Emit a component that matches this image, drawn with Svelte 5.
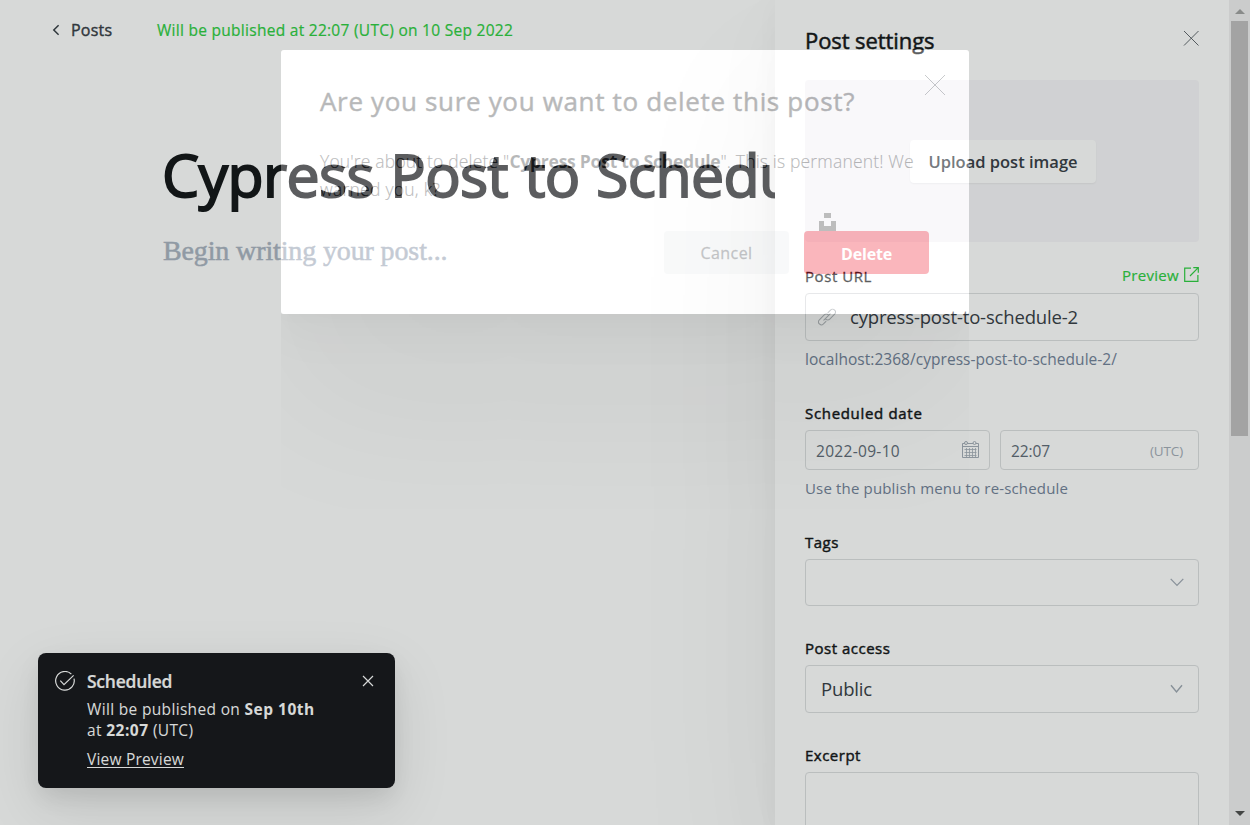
<script>
  const postTitle = 'Cypress Post to Schedule';
  const slug = 'cypress-post-to-schedule-2';
</script>

<div class="screen">
  <main class="editor">
    <header>
      <a class="back" href="#posts">
        <svg width="8" height="12" viewBox="0 0 8 12"><path d="M6.6 1.2 1.8 6l4.8 4.8" fill="none" stroke="#394047" stroke-width="1.5" /></svg>
        <span>Posts</span>
      </a>
      <span class="status">Will be published at 22:07 (UTC) on 10 Sep 2022</span>
    </header>
    <h1>{postTitle}</h1>
    <p class="body">Begin writing your post...</p>
  </main>

  <aside class="panel">
    <div class="panel-head">
      <h2>Post settings</h2>
      <svg width="16" height="16" viewBox="0 0 16 16"><path d="m1 1 14.5 14.5M15.5 1 1 15.5" stroke="#50575e" stroke-width=".9" /></svg>
    </div>

    <div class="upload">
      <button class="upload-btn">Upload post image</button>
      <svg class="unsplash" width="17" height="18" viewBox="0 0 17 18" shape-rendering="crispEdges"><path fill="#a1a1a1" d="M5 0h7v5H5zM0 8h5v5h7V8h5v10H0z" /></svg>
    </div>

    <div class="label first">
      <span class="url-label">Post URL</span>
      <a class="preview" href="#preview">
        <span>Preview</span>
        <svg width="15" height="15" viewBox="0 0 15 15" fill="none" stroke="#30cf43" stroke-width="1.2"><path d="M7 1.1H.7v13.2h13.2V8M6 9l8-8.2M9.3.7h5v5" /></svg>
      </a>
    </div>
    <div class="field url">
      <svg width="18" height="18" viewBox="0 0 24 24" fill="none" stroke="#b4b8bc" stroke-width="1.4" stroke-linecap="round"><path d="m10.6 17.8-3.3 3.4a3.8 3.8 0 0 1-5.5-5.4l6.5-6.6a3.8 3.8 0 0 1 5.5 0M13.4 6.2l3.3-3.4a3.8 3.8 0 0 1 5.5 5.4l-6.5 6.6a3.8 3.8 0 0 1-5.5 0" /><path d="m7.8 16.2 8.4-8.4" /></svg>
      <span>{slug}</span>
    </div>
    <p class="help host">localhost:2368/{slug}/</p>

    <div class="label"><b class="sched">Scheduled date</b></div>
    <div class="when">
      <div class="field date">
        <span>2022-09-10</span>
        <svg width="17" height="18" viewBox="0 0 17 18" fill="none" stroke="#a5adb8" stroke-width="1"><path d="M.5 2.5h16v14H.5zM.5 5.5h16" /><path d="M2.5 8.5h12M2.5 11.5h12M2.5 14.5h12M4.5 7v9M7.5 7v9M10.5 7v9M13.5 7v9" stroke-width=".8" /><circle cx="4" cy="2" r="1.5" fill="#fff" /><circle cx="12.5" cy="2" r="1.5" fill="#fff" /></svg>
      </div>
      <div class="field time"><span>22:07</span><small>(UTC)</small></div>
    </div>
    <p class="help resched">Use the publish menu to re-schedule</p>

    <div class="label"><b>Tags</b></div>
    <div class="field select tags">
      <span></span>
      <svg width="14" height="9" viewBox="0 0 14 9"><path d="M.7.9 7 7.4 13.3.9" fill="none" stroke="#a3abb6" stroke-width="1.3" /></svg>
    </div>

    <div class="label gap"><b>Post access</b></div>
    <div class="field select access">
      <span>Public</span>
      <svg width="13" height="10" viewBox="0 0 13 10"><path d="M1 1.2 6.5 8 12 1.2" fill="none" stroke="#a0a9b3" stroke-width="1.4" /></svg>
    </div>

    <div class="label gap"><b>Excerpt</b></div>
    <div class="field excerpt"></div>
  </aside>

  <div class="scrollbar">
    <i class="up"></i>
    <div class="thumb"></div>
    <i class="down"></i>
  </div>

  <section class="toast">
    <svg class="tick" width="20" height="20" viewBox="0 0 20 20" fill="none" stroke="#fff" stroke-width="1.2"><path d="M16.4 3.1A9.3 9.3 0 1 0 19 7.6" /><path d="M5.3 9.6 9 13.6 18.6 4.4" /></svg>
    <div class="toast-copy">
      <h3>Scheduled</h3>
      <p>Will be published on <b>Sep 10th</b><br />at <b>22:07</b> (UTC)</p>
      <a href="#view">View Preview</a>
    </div>
    <svg class="toast-x" width="12" height="12" viewBox="0 0 12 12"><path d="m1 1 10 10M11 1 1 11" stroke="#fff" stroke-width="1.2" /></svg>
  </section>

  <div class="dim"></div>
  <div class="modal-shadow"><div></div></div>
  <section class="modal">
    <svg class="modal-x" width="22" height="22" viewBox="0 0 22 22"><path d="m1 1 20 20M21 1 1 21" stroke="#394047" stroke-width=".9" /></svg>
    <h2>Are you sure you want to delete this post?</h2>
    <p>You're about to delete "<b>{postTitle}</b>". This is permanent! We<br /><span>warned you, k?</span></p>
    <div class="actions">
      <button class="cancel">Cancel</button>
      <button class="delete">Delete</button>
    </div>
  </section>
</div>

<style>
  :global(body) { margin: 0; overflow: hidden; }
  .screen {
    position: relative;
    display: flex;
    width: 1250px;
    height: 825px;
    overflow: hidden;
    background: #fff;
    color: #15171a;
    font-family: "Open Sans", "Noto Sans", sans-serif;
  }
  .screen * { box-sizing: border-box; }
  h1, h2, h3, p { margin: 0; font-weight: 400; }
  a { color: inherit; text-decoration: none; }
  button { border: 0; padding: 0; font-family: inherit; }
  svg { display: block; flex: none; }

  .editor { width: 775px; flex: none; white-space: nowrap; overflow: hidden; }
  header { display: flex; align-items: center; height: 60px; padding-left: 52px; }
  .back { display: flex; align-items: center; width: 105px; gap: 11px; font-size: 16px; color: #394047; letter-spacing: .2px; -webkit-text-stroke: .4px #394047; }
  .status { font-size: 15.5px; letter-spacing: .28px; color: #30cf43; -webkit-text-stroke: .2px #30cf43; }
  h1 { margin: 74px 0 0 162px; line-height: 80px; font-size: 59px; letter-spacing: -.62px; word-spacing: 1.7px; -webkit-text-stroke: 1.9px #15171a; }
  .body { margin: 17px 0 0 163px; font: 400 28px/40px "Liberation Serif", serif; letter-spacing: -.13px; color: #abb4c2; -webkit-text-stroke: .5px #abb4c2; }

  .panel {
    position: relative;
    width: 454px;
    flex: none;
    padding: 0 30px;
    background: #fff;
    box-shadow: 0 80px 170px rgba(0, 0, 0, .06), 0 22px 70px rgba(0, 0, 0, .04), 0 5px 22px rgba(0, 0, 0, .03);
  }
  .panel-head { display: flex; justify-content: space-between; height: 80px; }
  .panel-head h2 { line-height: 30px; padding-top: 25px; font-size: 22px; letter-spacing: -.08px; -webkit-text-stroke: .5px #15171a; }
  .panel-head svg { margin-top: 30px; }
  .upload { position: relative; display: flex; justify-content: center; align-items: center; height: 162px; border-radius: 4px; background: #f7f6f9; padding-left: 2px; }
  .upload-btn { width: 186px; height: 43px; border-radius: 4px; background: #fff; font-size: 16.5px; font-weight: 600; color: #394047; box-shadow: 0 1px 2px rgba(0, 0, 0, .06); }
  .unsplash { position: absolute; left: 14px; bottom: 11px; }
  .label { display: flex; justify-content: space-between; line-height: 34px; padding-top: 19px; font-size: 15px; letter-spacing: .3px; }
  .label.first { padding-top: 16px; height: 51px; }
  .label.gap { padding-top: 25px; }
  .label b { font-weight: 400; font-size: 15px; letter-spacing: .5px; -webkit-text-stroke: .45px #15171a; }
  .label b.sched { letter-spacing: .68px; }
  .url-label { letter-spacing: .57px; padding-top: 1px; -webkit-text-stroke: .3px #15171a; }
  .preview { display: flex; align-items: center; gap: 5px; color: #30cf43; height: 33px; }
  .preview span { -webkit-text-stroke: .2px #30cf43; }
  .field { display: flex; align-items: center; border: 1px solid #dddfe1; border-radius: 4px; color: #394047; }
  .url { height: 48px; padding-left: 12px; font-size: 18.5px; letter-spacing: -.16px; }
  .url svg { margin-right: 14px; }
  .url span, .access span { padding-bottom: 2px; }
  .help { height: 36px; line-height: 36px; font-size: 15.5px; color: #74839a; letter-spacing: .04px; }
  .resched { font-size: 15px; letter-spacing: .16px; }
  .when { display: flex; gap: 10px; }
  .date, .time { height: 40px; justify-content: space-between; font-size: 15.5px; color: #626d79; padding: 0 10px; letter-spacing: .31px; }
  .date span, .time span, .time small { padding-top: 2px; }
  .date { width: 185px; }
  .time { width: 199px; padding-right: 15px; letter-spacing: -.11px; }
  .time small { font-size: 13.5px; color: #a5adb8; letter-spacing: -.15px; }
  .select { justify-content: space-between; padding: 0 14px 0 15px; font-size: 18.5px; letter-spacing: -.17px; }
  .tags { height: 47px; }
  .access { height: 48px; padding-right: 15px; }
  .excerpt { height: 90px; }

  .scrollbar { width: 21px; flex: none; position: relative; display: flex; flex-direction: column; align-items: center; background: #f1f0f1; }
  .thumb { width: 17px; height: 415px; margin-top: 7px; background: #c1bfc0; }
  .up, .down { width: 0; height: 0; border: 5px solid transparent; }
  .up { margin-top: 9px; border-top: 0; border-bottom-color: #a3a3a3; }
  .down { margin-top: auto; margin-bottom: 9px; border-bottom: 0; border-top-color: #505050; }

  .toast {
    position: absolute;
    left: 38px;
    top: 653px;
    display: flex;
    width: 357px;
    height: 135px;
    padding: 18px 21px 0 17px;
    border-radius: 8px;
    background: #18181d;
    color: #fff;
    box-shadow: 0 10px 22px rgba(0, 0, 0, .08), 0 20px 60px rgba(0, 0, 0, .1);
  }
  .toast-copy { flex: 1; padding-left: 12px; white-space: nowrap; }
  .toast h3 { font-size: 17.5px; line-height: 20px; font-weight: 600; letter-spacing: -.25px; -webkit-text-stroke: .2px #fff; }
  .toast p { padding-top: 8px; font-size: 15.5px; line-height: 21px; letter-spacing: .33px; }
  .toast p b { font-weight: 700; letter-spacing: .5px; }
  .toast a { display: block; padding-top: 8px; font-size: 15.5px; line-height: 21px; letter-spacing: .2px; text-decoration: underline; text-underline-offset: 2px; }
  .toast-x { margin-top: 4px; }

  .dim { position: absolute; left: 281px; top: 50px; width: 688px; height: 264px; border-radius: 3px; box-shadow: 0 0 0 1300px rgba(5, 17, 11, .16); }
  .modal-shadow { position: absolute; left: 281px; top: 314px; width: 688px; height: 300px; overflow: hidden; }
  .modal-shadow div { width: 688px; height: 264px; margin-top: -264px; border-radius: 3px; box-shadow: 0 100px 160px rgba(6, 0, 3, .045), 0 22px 50px rgba(6, 0, 3, .03), 0 6px 14px rgba(0, 0, 0, .012); }
  .modal { position: absolute; left: 281px; top: 50px; width: 688px; height: 264px; padding: 34px 40px 40px 39px; border-radius: 3px; background: #fff; opacity: .3; }
  .modal-x { position: absolute; right: 23px; top: 24px; }
  .modal h2 { font-size: 26px; line-height: 34px; letter-spacing: .66px; white-space: nowrap; -webkit-text-stroke: .5px #15171a; }
  .modal p { margin-top: 29px; font-size: 17.5px; line-height: 28px; font-weight: 300; letter-spacing: .17px; white-space: nowrap; color: #15171a; -webkit-text-stroke: .15px #15171a; }
  .modal p b { font-weight: 700; letter-spacing: -.24px; -webkit-text-stroke: 0; }
  .modal p span { letter-spacing: .26px; }
  .actions { display: flex; justify-content: flex-end; gap: 15px; margin-top: 28px; }
  .actions button { width: 125px; height: 43px; border-radius: 4px; font-size: 16px; }
  .cancel { background: #ebeef0; color: #394047; letter-spacing: .42px; -webkit-text-stroke: .3px #394047; }
  .delete { background: #f11226; color: #fff; font-weight: 700; letter-spacing: -.17px; padding-top: 2px; }
</style>
